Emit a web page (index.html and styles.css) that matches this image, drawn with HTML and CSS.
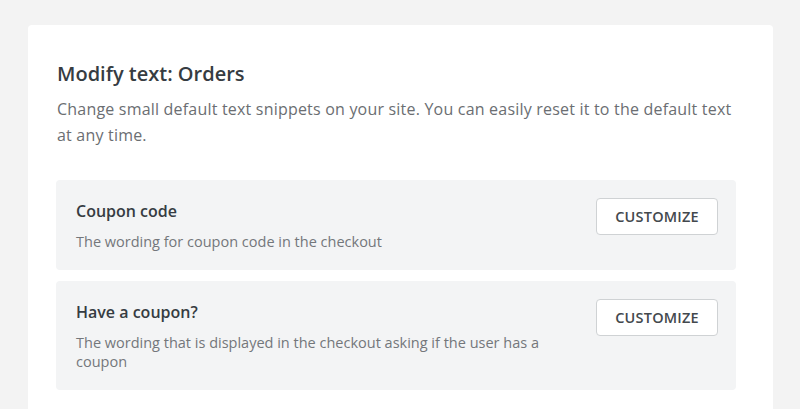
FILE: index.html
```html
<!DOCTYPE html>
<html lang="en">
<head>
  <meta charset="UTF-8">
  <meta name="viewport" content="width=device-width, initial-scale=1.0">
  <title>Modify text: Orders</title>
  <link rel="stylesheet" href="styles.css">
</head>
<body>
  <div class="card">
    <h2 class="card-title">Modify text: Orders</h2>
    <p class="card-desc">Change small default text snippets on your site. You can easily reset it to the default text at any time.</p>

    <div class="snippets">
      <div class="snippet">
        <div class="snippet-info">
          <h4>Coupon code</h4>
          <p>The wording for coupon code in the checkout</p>
        </div>
        <button class="customize-btn">Customize</button>
      </div>
      <div class="snippet">
        <div class="snippet-info">
          <h4>Have a coupon?</h4>
          <p>The wording that is displayed in the checkout asking if the user has a coupon</p>
        </div>
        <button class="customize-btn">Customize</button>
      </div>
    </div>
  </div>
</body>
</html>
```

FILE: styles.css
```css
body {
  margin: 0;
  font-family: 'Open Sans', sans-serif;
  background-color: #f3f3f3;
  padding: 25px 27px 0 28px;
}
.card {
  background: white;
  border-radius: 4px 4px 0 0;
  padding: 35px 37px 40px 29px;
  min-height: 400px;
}
.card-title {
  margin: 0;
  font-size: 20px;
  font-weight: 600;
  color: #363c42;
  line-height: 28px;
}
.card-desc {
  margin: 8px 0 0;
  font-size: 16px;
  line-height: 26px;
  letter-spacing: 0.2px;
  color: #6b6e72;
}
.snippets {
  margin-top: 32px;
  margin-left: -1px;
  display: flex;
  flex-direction: column;
  gap: 11px;
}
.snippet {
  background-color: #f3f4f5;
  border-radius: 4px;
  padding: 18px 18px 19px 20px;
  display: flex;
  justify-content: space-between;
  align-items: flex-start;
  gap: 40px;
}
.snippet-info h4 {
  margin: 1px 0 0;
  font-size: 16px;
  line-height: 24px;
  font-weight: 600;
  color: #363c42;
}
.snippet-info p {
  margin: 9px 0 0;
  font-size: 14.5px;
  line-height: 19px;
  color: #74777b;
}
.customize-btn {
  flex-shrink: 0;
  width: 122px;
  height: 37px;
  background: white;
  border: 1px solid #cfd2d4;
  border-radius: 4px;
  font-family: 'Open Sans', sans-serif;
  font-size: 14.5px;
  font-weight: 600;
  letter-spacing: 0.2px;
  color: #43484d;
  text-transform: uppercase;
  cursor: pointer;
}
```
